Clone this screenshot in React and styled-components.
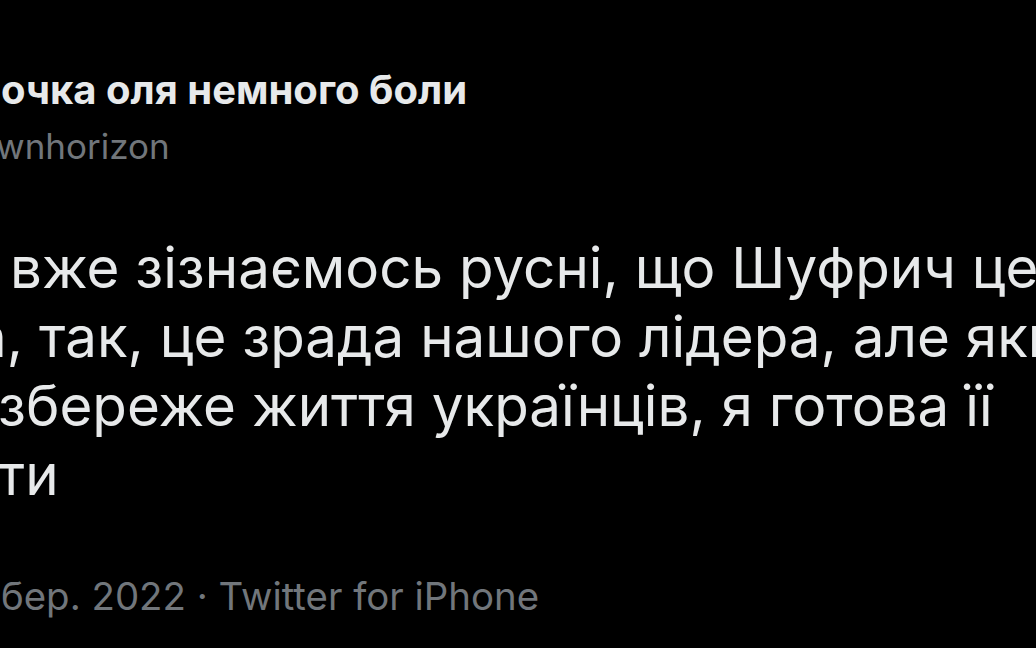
import styled, { createGlobalStyle } from 'styled-components';

const GlobalStyle = createGlobalStyle`
  html, body {
    margin: 0;
    padding: 0;
    background: #000;
  }
  body {
    font-family: "Inter", "Roboto", "Noto Sans", sans-serif;
    -webkit-font-smoothing: antialiased;
  }
`;

const Page = styled.div`
  width: 1036px;
  height: 648px;
  background: #000;
  overflow: hidden;
  display: flex;
  flex-direction: column;
  padding-top: 66px;
  box-sizing: border-box;
`;

const Header = styled.div`
  display: flex;
  flex-direction: column;
  gap: 9px;
`;

const Name = styled.div`
  color: #e7e9ea;
  font-weight: 700;
  font-size: 40px;
  line-height: 48px;
  white-space: nowrap;
  margin-left: ${(p) => p.$shift || 0}px;
`;

const Handle = styled.div`
  color: #71767b;
  font-size: 35px;
  line-height: 46px;
  white-space: nowrap;
  margin-left: ${(p) => p.$shift || 0}px;
`;

const Body = styled.div`
  margin-top: 64px;
  display: flex;
  flex-direction: column;
`;

const Line = styled.div`
  color: #e7e9ea;
  font-size: 56.5px;
  line-height: 69px;
  white-space: nowrap;
  margin-left: ${(p) => p.$shift || 0}px;
`;

const Meta = styled.div`
  margin-top: 64px;
  color: #71767b;
  font-size: 38.4px;
  line-height: 46px;
  white-space: nowrap;
  margin-left: ${(p) => p.$shift || 0}px;
`;

const lines = [
  { text: 'вже зізнаємось русні, що Шуфрич це', shift: 10 },
  { text: 'а, так, це зрада нашого лідера, але якщо', shift: -25 },
  { text: 'збереже життя українців, я готова її', shift: -2 },
  { text: 'ти', shift: -2 },
];

export default function App() {
  return (
    <>
      <GlobalStyle />
      <Page>
        <Header>
          <Name $shift={1}>очка оля немного боли</Name>
          <Handle $shift={-4}>wnhorizon</Handle>
        </Header>
        <Body>
          {lines.map((l, i) => (
            <Line key={i} $shift={l.shift}>
              {l.text}
            </Line>
          ))}
        </Body>
        <Meta $shift={1}>бер. 2022 · Twitter for iPhone</Meta>
      </Page>
    </>
  );
}
